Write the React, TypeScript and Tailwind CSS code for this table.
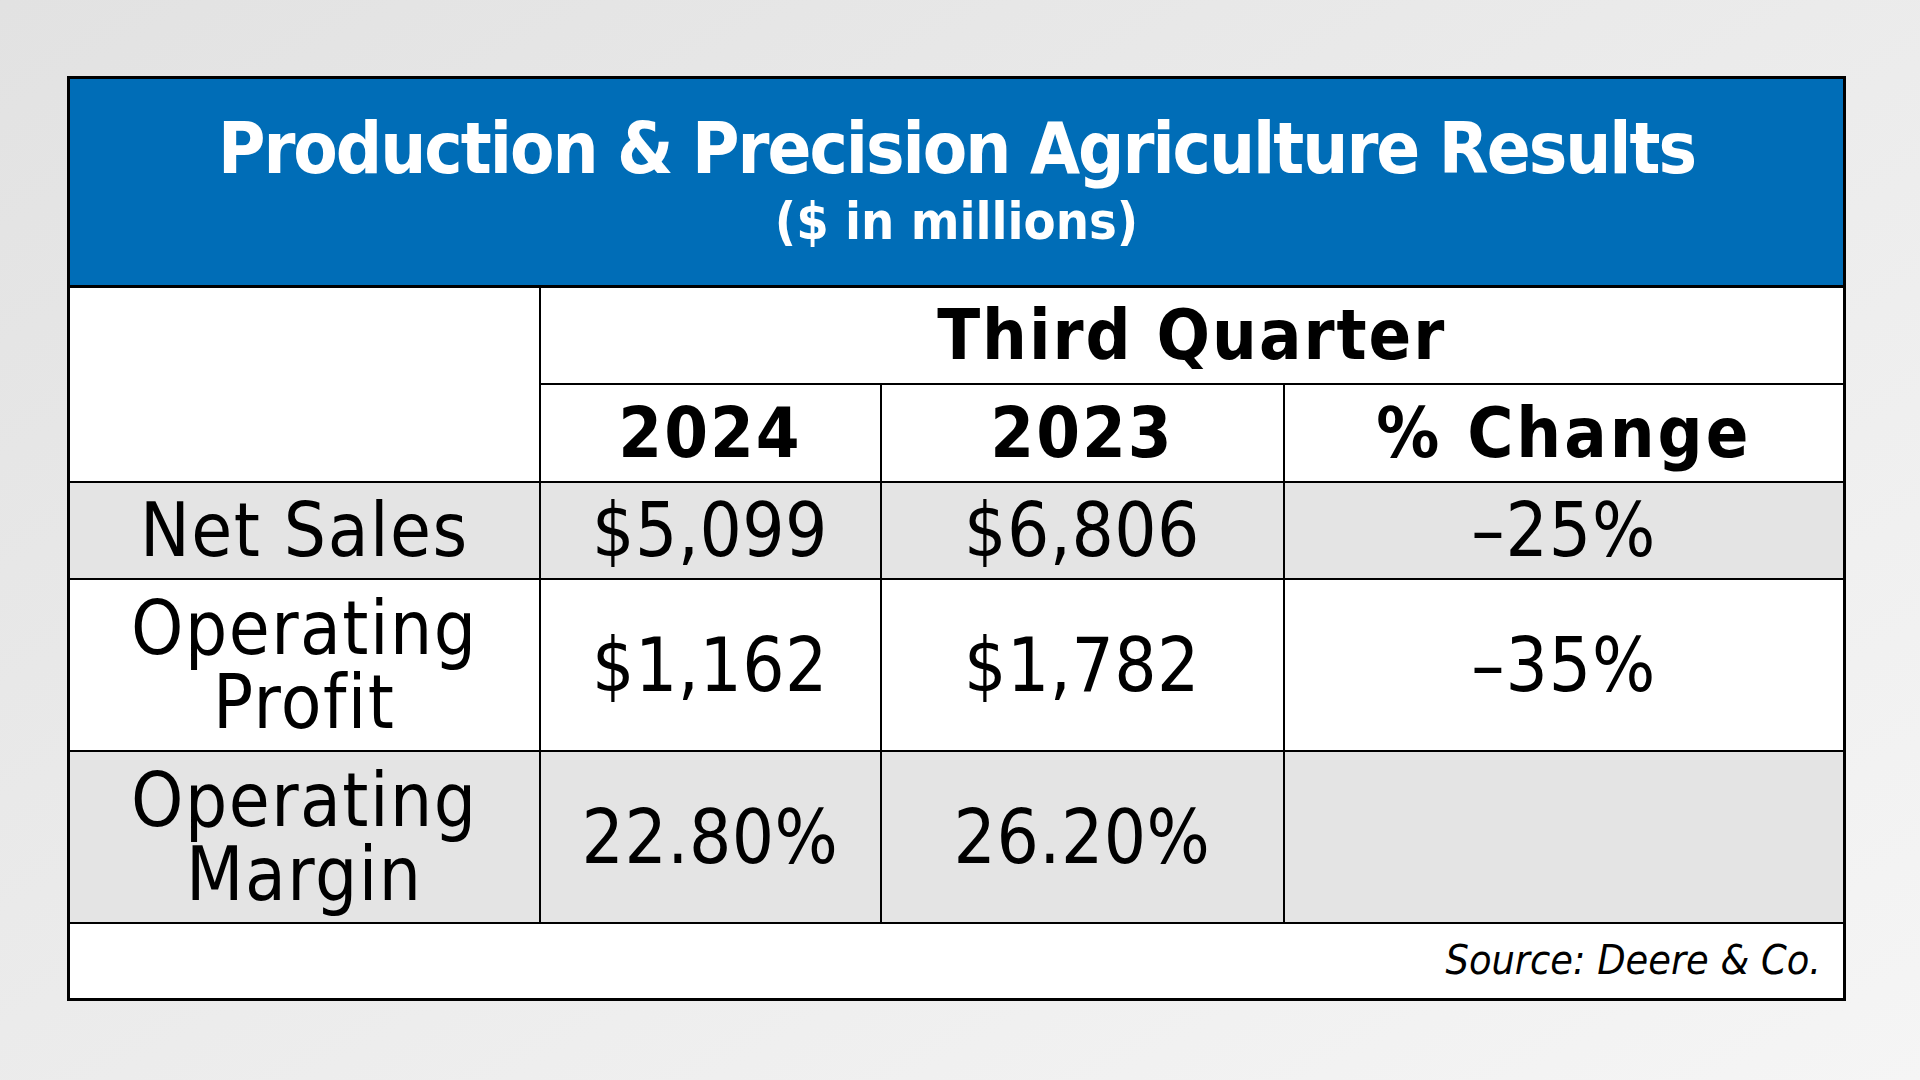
import React from "react";

const rows = [
  { label: ["Net Sales"], a: "$5,099", b: "$6,806", c: "–25%", gray: true, h: "h-[97px]" },
  { label: ["Operating", "Profit"], a: "$1,162", b: "$1,782", c: "–35%", gray: false, h: "h-[172px]" },
  { label: ["Operating", "Margin"], a: "22.80%", b: "26.20%", c: "", gray: true, h: "h-[172px]" },
];

export default function App() {
  return (
    <div className="min-h-screen w-full bg-gradient-to-br from-[#e2e2e2] to-[#f5f5f5] pt-[76px] pl-[67px] font-['Liberation_Sans_Narrow','DejaVu_Sans_Condensed',sans-serif] text-black">
      <table className="w-[1776px] table-fixed border-collapse border-[3px] border-black">
        <colgroup>
          <col className="w-[471px]" />
          <col className="w-[341px]" />
          <col className="w-[403px]" />
          <col className="w-[561px]" />
        </colgroup>
        <tbody>
          <tr className="h-[209px] bg-[#006db7]">
            <td colSpan={4} className="border-b-[3px] border-black text-center text-white font-bold">
              <div className="text-[72px] leading-[80px] tracking-[-2px] mt-[-6px]">Production &amp; Precision Agriculture Results</div>
              <div className="text-[52px] leading-[58px] mt-[4px]">($ in millions)</div>
            </td>
          </tr>
          <tr className="h-[97px] bg-white">
            <td rowSpan={2} className="border-2 border-black bg-white"></td>
            <td colSpan={3} className="border-2 border-black text-center text-[70px] font-bold tracking-[2px] leading-none">
              Third Quarter
            </td>
          </tr>
          <tr className="h-[98px] bg-white">
            <td className="border-2 border-black text-center text-[70px] font-bold tracking-[2px] leading-none">2024</td>
            <td className="border-2 border-black text-center text-[70px] font-bold tracking-[2px] leading-none">2023</td>
            <td className="border-2 border-black text-center text-[70px] font-bold tracking-[3px] leading-none">% Change</td>
          </tr>
          {rows.map((r, i) => (
            <tr key={i} className={`${r.h} ${r.gray ? "bg-[#e4e4e4]" : "bg-white"}`}>
              <td className="border-2 border-black text-center text-[74px] leading-[74px] tracking-[1.5px]">
                {r.label.map((l, j) => (
                  <div key={j}>{l}</div>
                ))}
              </td>
              <td className="border-2 border-black text-center text-[74px] leading-none tracking-[0.5px]">{r.a}</td>
              <td className="border-2 border-black text-center text-[74px] leading-none tracking-[0.5px]">{r.b}</td>
              <td className="border-2 border-black text-center text-[74px] leading-none tracking-[1px]">{r.c}</td>
            </tr>
          ))}
          <tr className="h-[77px] bg-white">
            <td colSpan={4} className="border-t-2 border-black text-right pr-[22px] text-[41px] italic">
              Source: Deere &amp; Co.
            </td>
          </tr>
        </tbody>
      </table>
    </div>
  );
}
